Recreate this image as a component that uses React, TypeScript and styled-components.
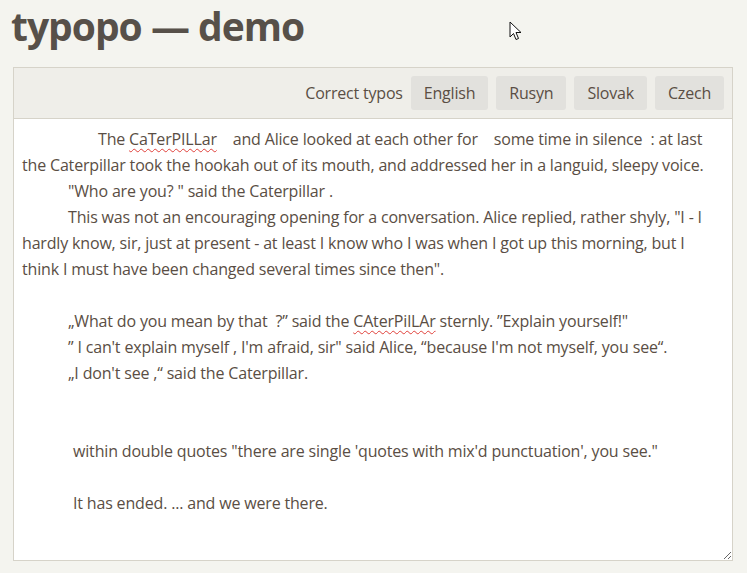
import styled, { createGlobalStyle } from "styled-components";

const GlobalStyle = createGlobalStyle`
  body {
    margin: 0;
    background: #f4f4ef;
    font-family: "Open Sans", "Noto Sans", sans-serif;
    color: #5a4e44;
  }
`;

interface Line {
  indent: number;
  parts: (string | { typo: string })[];
}

const text: Line[] = [
  {
    indent: 76,
    parts: [
      "The ",
      { typo: "CaTerPILLar" },
      "    and Alice looked at each other for    some time in silence  : at last",
    ],
  },
  { indent: 0, parts: ["the Caterpillar took the hookah out of its mouth, and addressed her in a languid, sleepy voice."] },
  { indent: 46, parts: ['"Who are you? " said the Caterpillar .'] },
  { indent: 46, parts: ['This was not an encouraging opening for a conversation. Alice replied, rather shyly, "I - I'] },
  { indent: 0, parts: ["hardly know, sir, just at present - at least I know who I was when I got up this morning, but I"] },
  { indent: 0, parts: ['think I must have been changed several times since then".'] },
  { indent: 0, parts: [] },
  {
    indent: 46,
    parts: ["„What do you mean by that  ?” said the ", { typo: "CAterPilLAr" }, ' sternly. ”Explain yourself!"'],
  },
  { indent: 46, parts: ['” I can\'t explain myself , I\'m afraid, sir" said Alice, “because I\'m not myself, you see“.'] },
  { indent: 46, parts: ["„I don't see ,“ said the Caterpillar."] },
  { indent: 0, parts: [] },
  { indent: 0, parts: [] },
  { indent: 51, parts: ['within double quotes "there are single \'quotes with mix\'d punctuation\', you see."'] },
  { indent: 0, parts: [] },
  { indent: 51, parts: ["It has ended. ... and we were there."] },
];

const languages = ["English", "Rusyn", "Slovak", "Czech"];

export default function App() {
  return (
    <Page>
      <GlobalStyle />
      <Title>typopo — demo</Title>
      <Panel>
        <Toolbar>
          <Label>Correct typos</Label>
          {languages.map((lang) => (
            <LangButton key={lang}>{lang}</LangButton>
          ))}
        </Toolbar>
        <Editor>
          {text.map((line, i) => (
            <TextLine key={i} $indent={line.indent}>
              {line.parts.map((part, j) =>
                typeof part === "string" ? part : <Typo key={j}>{part.typo}</Typo>
              )}
            </TextLine>
          ))}
        </Editor>
      </Panel>
      <Cursor width="14" height="21" viewBox="0 0 14 21">
        <path d="M1 1 L1 16 L4.5 12.5 L7 18.5 L9.5 17.5 L7 11.5 L12 11.5 Z" fill="#fff" stroke="#111" strokeWidth="1" strokeLinejoin="round" />
      </Cursor>
    </Page>
  );
}

const Page = styled.div`
  position: relative;
  padding: 0 0 12px 13px;
  width: 720px;
`;

const Title = styled.h1`
  margin: 0 0 0 -2px;
  height: 67px;
  font-size: 39px;
  line-height: 52px;
  font-weight: 700;
  letter-spacing: -1px;
  color: #575049;
  white-space: nowrap;
`;

const Panel = styled.div`
  border: 1px solid #d6d3c9;
  background: #fff;
  display: flex;
  flex-direction: column;
`;

const Toolbar = styled.div`
  display: flex;
  justify-content: flex-end;
  align-items: center;
  gap: 8px;
  padding: 8px;
  background: #efeee9;
  border-bottom: 1px solid #d6d3c9;
`;

const Label = styled.span`
  font-size: 16px;
  letter-spacing: -0.2px;
`;

const LangButton = styled.button`
  height: 34px;
  padding: 0 13px;
  border: none;
  border-radius: 3px;
  background: #e2e1dd;
  color: #5a4e44;
  font-family: "Open Sans", "Noto Sans", sans-serif;
  font-size: 16px;
  letter-spacing: -0.2px;
  cursor: pointer;
`;

const Editor = styled.div`
  height: 427px;
  padding: 7px 8px;
  overflow: auto;
  resize: both;
  font-size: 16px;
  line-height: 26px;
  letter-spacing: -0.17px;
`;

const TextLine = styled.div<{ $indent: number }>`
  white-space: pre;
  min-height: 26px;
  padding-left: ${(p) => p.$indent}px;
`;

const Typo = styled.span`
  text-decoration: underline wavy #e0403a;
  text-decoration-thickness: 1px;
  text-underline-offset: 3px;
`;

const Cursor = styled.svg`
  position: absolute;
  left: 509px;
  top: 21px;
`;
